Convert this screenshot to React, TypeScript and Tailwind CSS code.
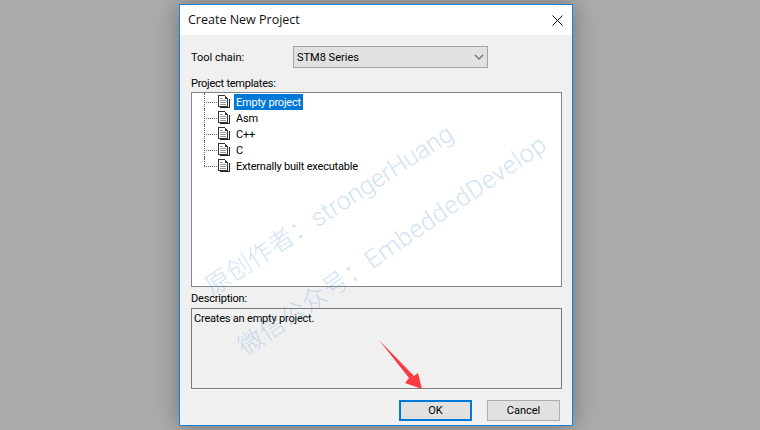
import React from "react";

const items = ["Empty project", "Asm", "C++", "C", "Externally built executable"];

function Doc() {
  return (
    <svg width="12" height="14" viewBox="0 0 12 14" className="block shrink-0" shapeRendering="crispEdges">
      <path d="M0 0h7l3 3v9H0z" fill="#fff" />
      <path d="M0 0h7v1H1v10h8V3h1v9H0zM7 1h1v1h1v1h1v1H7z" fill="#333" />
      <path d="M2 3h3v1H2zM2 5h6v1H2zM2 7h6v1H2zM2 9h6v1H2z" fill="#999" />
      <path d="M11 4h1v9H2v-1h9z" fill="#222" />
    </svg>
  );
}

function Row({ label, selected, last }: { label: string; selected?: boolean; last?: boolean }) {
  return (
    <div className="flex h-4 items-center">
      <div className="relative h-4 w-[13px] shrink-0">
        <div className={`absolute left-0 top-[-1px] w-0 border-l border-dotted border-[#666] ${last ? "h-[9px]" : "h-[18px]"}`} />
        <div className="absolute left-0 top-2 h-0 w-[13px] border-t border-dotted border-[#666]" />
      </div>
      <div className="ml-[1px]"><Doc /></div>
      <span className={`ml-[4px] h-4 px-[2px] pt-[1px] leading-[16px] tracking-[-0.2px] ${selected ? "bg-[#0078d7] text-white" : "text-black"}`}>{label}</span>
    </div>
  );
}

export default function App() {
  return (
    <div className="relative flex h-[430px] w-[760px] overflow-hidden bg-[#ababab] font-['Roboto',sans-serif] text-[11px] text-black">
      <div className="ml-[179px] mt-1 h-[422px] w-[394px] border border-[#1883d7] bg-[#f0f0f0] shadow-[0_0_22px_rgba(0,0,0,0.35)]">
        <div className="flex h-[30px] items-center justify-between bg-white pl-2 pr-[9px]">
          <span className="font-['Open_Sans',sans-serif] text-[12.5px] text-[#111]">Create New Project</span>
          <svg width="11" height="11" viewBox="0 0 11 11" className="block" stroke="#000" strokeWidth="1">
            <path d="M0.5 0.5l10 10M10.5 0.5l-10 10" />
          </svg>
        </div>
        <div className="flex flex-col px-[11px] pt-[11px]">
          <div className="flex h-[22px] items-center">
            <span className="w-[102px] pt-[2px]">Tool chain:</span>
            <div className="flex h-[22px] w-[195px] items-center justify-between border border-[#a5a5a5] bg-[#e1e1e1] pl-[3px] pr-[3px]">
              <span className="pt-[2px]">STM8 Series</span>
              <svg width="10" height="6" viewBox="0 0 10 6" fill="none" stroke="#666" strokeWidth="1.1"><path d="M1 1l4 4 4-4" /></svg>
            </div>
          </div>
          <div className="mt-[9px] h-[15px] leading-[13px] tracking-[-0.25px]">Project templates:</div>
          <div className="h-[195px] w-[371px] border border-[#82878f] bg-white pl-3">
            <div className="pt-[1px]">
              {items.map((t, i) => (
                <Row key={t} label={t} selected={i === 0} last={i === items.length - 1} />
              ))}
            </div>
          </div>
          <div className="mt-[4px] h-[17px] leading-[15px] tracking-[-0.2px]">Description:</div>
          <div className="h-[81px] w-[371px] border border-[#7a7a7a] bg-[#f0f0f0] pl-[2px] pt-[2px] leading-[15px] tracking-[-0.2px] shadow-[0_1px_0_#fff]">
            Creates an empty project.
          </div>
          <div className="mt-[11px] flex justify-end gap-[15px] pr-[1px]">
            <div className="flex h-[21px] w-[73px] items-center justify-center border-2 border-[#0078d7] bg-[#e1e1e1] pt-[2px]">OK</div>
            <div className="flex h-[21px] w-[73px] items-center justify-center border border-[#adadad] bg-[#e1e1e1] pt-[2px]">Cancel</div>
          </div>
        </div>
      </div>

      <div className="pointer-events-none absolute left-[208px] top-[274px] origin-left -rotate-[33deg] whitespace-nowrap font-['Roboto','Noto_Sans_CJK_SC',sans-serif] text-[25px] font-light leading-[30px] text-[rgba(70,140,220,0.27)]">
        原创作者：strongerHuang
      </div>
      <div className="pointer-events-none absolute left-[241px] top-[335px] origin-left -rotate-[34.5deg] whitespace-nowrap font-['Roboto','Noto_Sans_CJK_SC',sans-serif] text-[25px] font-light leading-[30px] tracking-[0.6px] text-[rgba(70,140,220,0.27)]">
        微信公众号：EmbeddedDevelop
      </div>

      <svg width="50" height="60" viewBox="0 0 50 60" className="absolute left-[376px] top-[337px]">
        <path d="M3 3L38 39L42 36L46 52L29 46L33 41Z" fill="#fb3a41" />
      </svg>
    </div>
  );
}
